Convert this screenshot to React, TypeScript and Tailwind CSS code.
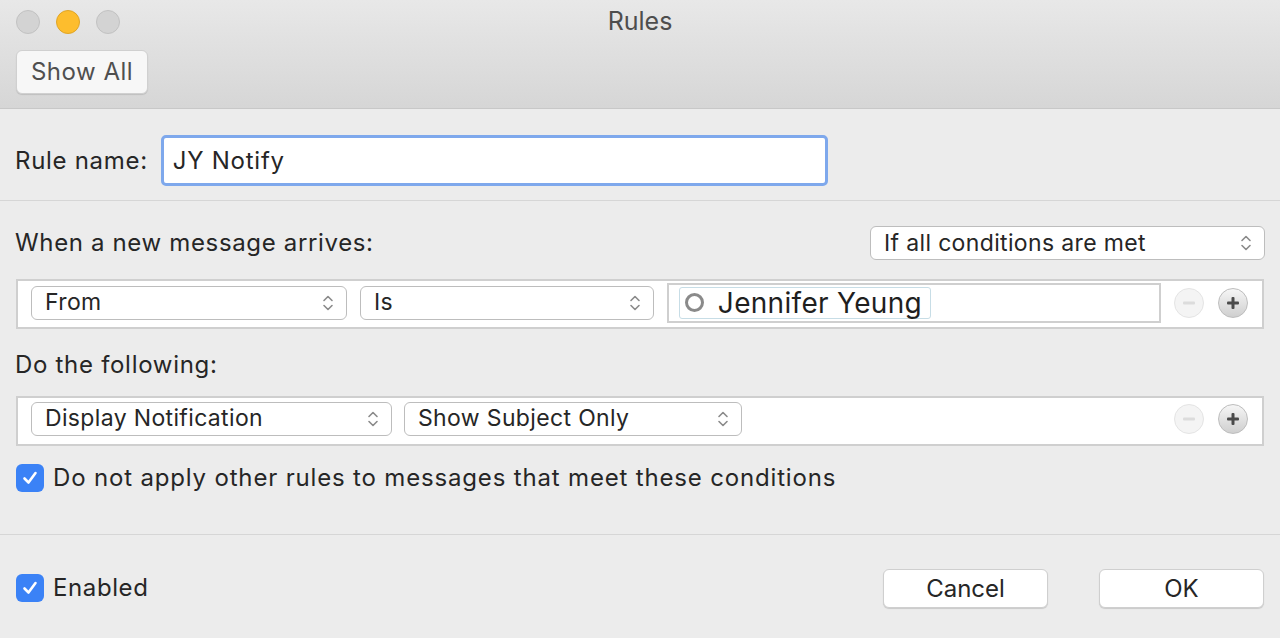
import React from "react";

const font = { fontFamily: "Inter, 'Noto Sans', sans-serif" };

function Chevrons() {
  return (
    <svg width="12" height="20" viewBox="0 0 12 20" fill="none" stroke="#8a8a8a" strokeWidth="1.6" strokeLinecap="round" strokeLinejoin="round">
      <path d="M2 7.5 L6 3.5 L10 7.5" />
      <path d="M2 12.5 L6 16.5 L10 12.5" />
    </svg>
  );
}

function Select({ label, className }: { label: string; className: string }) {
  return (
    <div className={`flex items-center justify-between rounded-[6px] border border-[#bdbdbd] bg-white pl-[13px] pr-[12px] text-[23px] text-[#262626] ${className}`}>
      <span className="leading-none tracking-[0.35px]">{label}</span>
      <Chevrons />
    </div>
  );
}

function RoundBtn({ kind, dim }: { kind: "minus" | "plus"; dim?: boolean }) {
  return (
    <div
      className={`flex h-[30px] w-[30px] items-center justify-center rounded-full border ${
        dim ? "border-[#e4e4e4] bg-[#f4f4f4]" : "border-[#bdbdbd] bg-gradient-to-b from-[#f6f6f6] to-[#cfcfcf]"
      }`}
    >
      <svg width="16" height="16" viewBox="0 0 16 16">
        <rect x="2" y="6.5" width="12" height="3" rx="1" fill={dim ? "#dcdcdc" : "#4a4a4a"} />
        {kind === "plus" && <rect x="6.5" y="2" width="3" height="12" rx="1" fill="#4a4a4a" />}
      </svg>
    </div>
  );
}

function Check() {
  return (
    <div className="flex h-[28px] w-[28px] items-center justify-center rounded-[6px] bg-[#3b82f6]">
      <svg width="18" height="18" viewBox="0 0 18 18" fill="none" stroke="white" strokeWidth="2.6" strokeLinecap="round" strokeLinejoin="round">
        <path d="M3.5 9.5 L7.5 13.5 L14.5 4" />
      </svg>
    </div>
  );
}

export default function App() {
  return (
    <div className="h-[638px] w-[1280px] overflow-hidden bg-[#ececec] text-[#262626]" style={font}>
      {/* Title bar / toolbar */}
      <div className="h-[109px] border-b border-[#c8c8c8] bg-gradient-to-b from-[#e8e8e8] to-[#d6d6d6]">
        <div className="relative flex h-[44px] items-center">
          <div className="flex gap-[16px] pl-[16px]">
            <div className="h-[24px] w-[24px] rounded-full border border-[#c2c2c2] bg-[#d3d3d3]" />
            <div className="h-[24px] w-[24px] rounded-full border border-[#e0a526] bg-[#fdbd2d]" />
            <div className="h-[24px] w-[24px] rounded-full border border-[#c2c2c2] bg-[#d3d3d3]" />
          </div>
          <div className="absolute inset-x-0 text-center text-[25px] text-[#4d4d4d]">Rules</div>
        </div>
        <div className="pl-[16px] pt-[6px]">
          <div className="flex h-[44px] w-[132px] items-center justify-center rounded-[6px] border border-[#d0d0d0] bg-[#f7f7f7] text-[24px] tracking-[0.5px] text-[#4f4f4f] shadow-[0_1px_1px_rgba(0,0,0,0.12)]">
            Show All
          </div>
        </div>
      </div>

      {/* Rule name */}
      <div className="flex h-[92px] items-center border-b border-[#d6d6d6] pl-[15px] pt-[12px]">
        <span className="mr-[13px] text-[24px] tracking-[0.7px]">Rule name:</span>
        <div className="flex h-[51px] w-[667px] items-center rounded-[5px] border-[3px] border-[#7ea8ec] bg-white pl-[9px] text-[24px] tracking-[0.75px]">
          JY Notify
        </div>
      </div>

      {/* Conditions */}
      <div className="px-[16px]">
        <div className="flex h-[78px] items-center justify-between">
          <span className="-ml-px pt-[6px] text-[24px] tracking-[0.65px]">When a new message arrives:</span>
          <Select label="If all conditions are met" className="mt-[6px] h-[34px] w-[395px] -mr-px" />
        </div>
        <div className="flex h-[50px] items-center gap-[13px] border-2 border-[#cfcfcf] bg-white pb-[3px] pl-[13px] pr-[14px]">
          <Select label="From" className="h-[34px] w-[317px]" />
          <Select label="Is" className="h-[34px] w-[295px]" />
          <div className="flex h-[40px] w-[496px] items-center border-2 border-[#cfcfcf] pl-[10px]">
            <div className="flex h-[32px] items-center gap-[14px] rounded-[3px] border border-[#c7dde6] pl-[5px] pr-[8px] text-[28px] text-[#1f1f1f]">
              <div className="h-[19px] w-[19px] rounded-full border-[3px] border-[#8a8a8a]" />
              <span className="leading-none tracking-[0.3px]">Jennifer Yeung</span>
            </div>
          </div>
          <div className="ml-auto flex gap-[14px]">
            <RoundBtn kind="minus" dim />
            <RoundBtn kind="plus" />
          </div>
        </div>

        {/* Actions */}
        <div className="flex h-[67px] items-center">
          <span className="-ml-px pt-[5px] text-[24px] tracking-[0.7px]">Do the following:</span>
        </div>
        <div className="flex h-[50px] items-center gap-[12px] border-2 border-[#cfcfcf] bg-white pb-[5px] pl-[13px] pr-[14px]">
          <Select label="Display Notification" className="h-[34px] w-[361px]" />
          <Select label="Show Subject Only" className="h-[34px] w-[338px]" />
          <div className="ml-auto flex gap-[14px]">
            <RoundBtn kind="minus" dim />
            <RoundBtn kind="plus" />
          </div>
        </div>

        <div className="flex h-[64px] items-center gap-[9px]">
          <Check />
          <span className="text-[24px] tracking-[0.83px]">Do not apply other rules to messages that meet these conditions</span>
        </div>
      </div>

      {/* Footer */}
      <div className="mt-[24px] flex h-[104px] items-center border-t border-[#d6d6d6] px-[16px]">
        <div className="flex items-center gap-[9px] pt-[2px]">
          <Check />
          <span className="text-[24px] tracking-[0.6px]">Enabled</span>
        </div>
        <div className="ml-auto flex gap-[51px] pt-[4px]">
          <div className="flex h-[39px] w-[165px] items-center justify-center rounded-[6px] border border-[#cfcfcf] bg-white text-[24px] shadow-[0_1px_1px_rgba(0,0,0,0.15)]">
            Cancel
          </div>
          <div className="flex h-[39px] w-[165px] items-center justify-center rounded-[6px] border border-[#cfcfcf] bg-white text-[24px] shadow-[0_1px_1px_rgba(0,0,0,0.15)]">
            OK
          </div>
        </div>
      </div>
    </div>
  );
}
